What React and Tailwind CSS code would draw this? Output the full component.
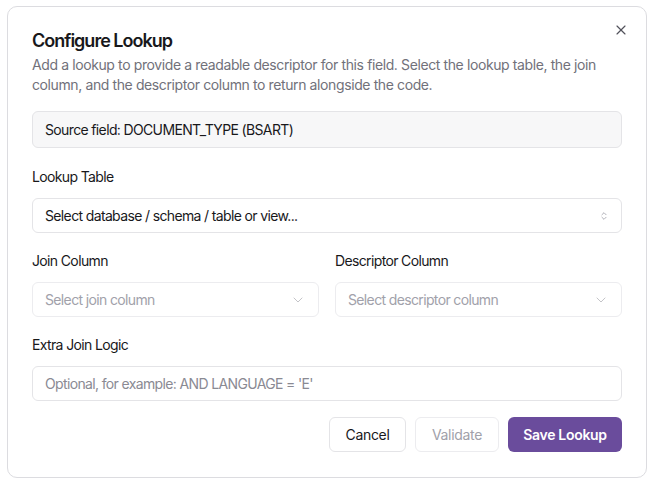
import { useState } from 'react';
import { X, ChevronDown, ChevronsUpDown } from 'lucide-react';

const font = { fontFamily: 'Inter, "Noto Sans", sans-serif' };

function FieldLabel({ children }) {
  return <div className="text-[14px] leading-5 text-[#18181b] mb-[11px]">{children}</div>;
}

function SelectBox({ placeholder, disabled, icon }) {
  return (
    <div
      className={`flex items-center justify-between h-[35px] px-3 rounded-md border bg-white ${
        disabled ? 'border-[#ececef] text-[#a1a1aa]' : 'border-[#e4e4e7] text-[#18181b]'
      } text-[14px]`}
    >
      <span>{placeholder}</span>
      {icon === 'updown' ? (
        <ChevronsUpDown className="w-[10px] h-[10px] text-[#a1a1aa]" strokeWidth={2} />
      ) : (
        <ChevronDown className="w-4 h-4 text-[#c4c4c8]" strokeWidth={1.5} />
      )}
    </div>
  );
}

export default function App() {
  const [extra, setExtra] = useState('');

  return (
    <div className="w-[655px] h-[485px] bg-white p-[7px] pt-[6px] tracking-[-0.04em]" style={font}>
      <div className="relative w-[640px] h-[472px] rounded-[10px] border border-[#dcdce0] bg-white px-6 pt-[22px] pb-6">
        <button className="absolute right-[17px] top-[15px] text-[#52525b]">
          <X className="w-4 h-4" strokeWidth={1.75} />
        </button>

        <h2 className="text-[18px] leading-6 font-semibold tracking-[-0.055em] text-[#18181b]">Configure Lookup</h2>
        <p className="mt-[2px] text-[14px] leading-5 tracking-[-0.028em] text-[#71717a]">
          Add a lookup to provide a readable descriptor for this field. Select the lookup table, the join
          column, and the descriptor column to return alongside the code.
        </p>

        <div className="mt-[16px] h-[37px] flex items-center px-3 rounded-md border border-[#e4e4e7] bg-[#f7f7f8] text-[14px] text-[#18181b]">
          Source field: DOCUMENT_TYPE (BSART)
        </div>

        <div className="mt-[19px]">
          <FieldLabel>Lookup Table</FieldLabel>
          <SelectBox placeholder="Select database / schema / table or view..." icon="updown" />
        </div>

        <div className="mt-[18px] grid grid-cols-2 gap-4">
          <div>
            <FieldLabel>Join Column</FieldLabel>
            <SelectBox placeholder="Select join column" disabled />
          </div>
          <div>
            <FieldLabel>Descriptor Column</FieldLabel>
            <SelectBox placeholder="Select descriptor column" disabled />
          </div>
        </div>

        <div className="mt-[18px]">
          <FieldLabel>Extra Join Logic</FieldLabel>
          <input
            value={extra}
            onChange={(e) => setExtra(e.target.value)}
            placeholder="Optional, for example: AND LANGUAGE = 'E'"
            className="w-full h-[35px] px-3 rounded-md border border-[#e4e4e7] text-[14px] text-[#18181b] placeholder:text-[#8a8a93] outline-none"
          />
        </div>

        <div className="mt-[16px] flex justify-end gap-[9px] tracking-[-0.02em]">
          <button className="h-[35px] w-[77px] rounded-md border border-[#e4e4e7] bg-white text-[14px] text-[#18181b]">
            Cancel
          </button>
          <button disabled className="h-[35px] w-[84px] rounded-md border border-[#ececef] bg-white text-[14px] text-[#a1a1aa]">
            Validate
          </button>
          <button className="h-[35px] w-[114px] rounded-md bg-[#6a4c9c] text-[14px] font-semibold text-white">
            Save Lookup
          </button>
        </div>
      </div>
    </div>
  );
}
